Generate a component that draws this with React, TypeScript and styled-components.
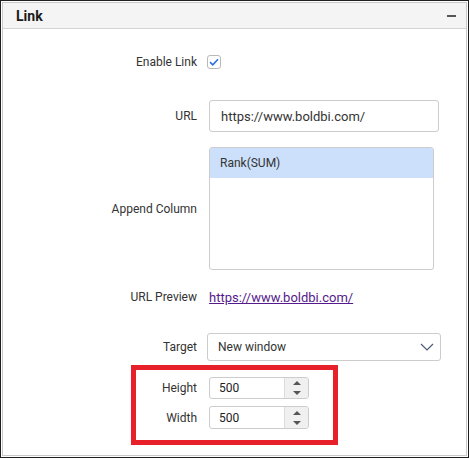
import React from "react";
import styled, { createGlobalStyle } from "styled-components";

const Global = createGlobalStyle`
  html, body { margin: 0; padding: 0; background: #fff; }
  body { font-family: Roboto, "Liberation Sans", Arial, sans-serif; }
  * { box-sizing: border-box; }
`;

const Frame = styled.div`
  width: 469px;
  height: 458px;
  border: 1px solid #1f1f1f;
  padding: 1px;
  background: #fff;
`;

const Panel = styled.div`
  width: 100%;
  height: 100%;
  border: 1px solid #c9c9c9;
  display: flex;
  flex-direction: column;
`;

const Header = styled.div`
  height: 26px;
  flex: none;
  background: #f4f4f4;
  border-bottom: 1px solid #d4d4d4;
  display: flex;
  align-items: center;
  justify-content: space-between;
  padding: 0 10px 0 13px;
`;

const Title = styled.span`
  font-size: 14px;
  font-weight: 700;
  color: #1a1a1a;
`;

const Minus = styled.span`
  width: 9px;
  height: 2px;
  background: #555;
  margin-top: 1px;
`;

const Body = styled.div`
  display: flex;
  flex-direction: column;
  padding-top: 25px;
`;

const Row = styled.div<{ $mt: number; $h: number; $label?: number; $gap?: number }>`
  display: grid;
  grid-template-columns: ${(p) => p.$label ?? 194}px 1fr;
  column-gap: ${(p) => p.$gap ?? 12}px;
  align-items: center;
  margin-top: ${(p) => p.$mt}px;
  height: ${(p) => p.$h}px;
`;

const Label = styled.span`
  text-align: right;
  font-size: 12px;
  color: #333;
  white-space: nowrap;
`;

const Check = styled.span`
  width: 14px;
  height: 14px;
  border: 1px solid #b9b9b9;
  border-radius: 3px;
  background: #fff;
  display: flex;
  align-items: center;
  justify-content: center;
  margin-left: -2px;
`;

const TextInput = styled.div`
  width: 230px;
  height: 32px;
  border: 1px solid #cccccc;
  border-radius: 3px;
  display: flex;
  align-items: center;
  padding-left: 11px;
  font-size: 13px;
  color: #333;
`;

const ListBox = styled.div`
  width: 225px;
  height: 123px;
  border: 1px solid #cccccc;
  border-radius: 3px;
  align-self: start;
  overflow: hidden;
`;

const ListItem = styled.div<{ $selected?: boolean }>`
  height: 30px;
  display: flex;
  align-items: center;
  padding-left: 10px;
  font-size: 12px;
  color: #333;
  background: ${(p) => (p.$selected ? "#cde0fb" : "transparent")};
`;

const Link = styled.a`
  font-size: 13px;
  color: #551a8b;
  text-decoration: underline;
`;

const Select = styled.div`
  width: 234px;
  height: 28px;
  border: 1px solid #cccccc;
  border-radius: 3px;
  display: flex;
  align-items: center;
  justify-content: space-between;
  padding: 0 6px 0 10px;
  font-size: 12px;
  color: #333;
  margin-left: -2px;
`;

const Annotation = styled.div`
  margin-top: 4px;
  margin-left: 128px;
  width: 207px;
  height: 80px;
  border: 5px solid #e8202a;
  padding-top: 7px;
  display: flex;
  flex-direction: column;
`;

const Spin = styled.div`
  width: 100px;
  border: 1px solid #cccccc;
  border-radius: 3px;
  display: flex;
  height: 100%;
  overflow: hidden;
`;

const SpinValue = styled.div`
  flex: 1;
  display: flex;
  align-items: center;
  padding-left: 9px;
  font-size: 12px;
  color: #222;
`;

const SpinButtons = styled.div`
  width: 24px;
  background: #f0f0f0;
  border-left: 1px solid #dcdcdc;
  display: flex;
  flex-direction: column;
  align-items: center;
  justify-content: center;
  gap: 6px;
`;

const Arrow = styled.span<{ $down?: boolean }>`
  width: 0;
  height: 0;
  border-left: 4px solid transparent;
  border-right: 4px solid transparent;
  ${(p) => (p.$down ? "border-top: 4px solid #555;" : "border-bottom: 4px solid #555;")}
`;

function Spinner({ value }: { value: string }) {
  return (
    <Spin>
      <SpinValue>{value}</SpinValue>
      <SpinButtons>
        <Arrow />
        <Arrow $down />
      </SpinButtons>
    </Spin>
  );
}

export default function App() {
  return (
    <>
      <Global />
      <Frame>
        <Panel>
          <Header>
            <Title>Link</Title>
            <Minus />
          </Header>
          <Body>
            <Row $mt={0} $h={16}>
              <Label>Enable Link</Label>
              <Check>
                <svg width="10" height="8" viewBox="0 0 10 8">
                  <path d="M1 4.2 L3.8 6.8 L9 1.2" fill="none" stroke="#2f6fe0" strokeWidth="1.6" />
                </svg>
              </Check>
            </Row>
            <Row $mt={30} $h={32}>
              <Label>URL</Label>
              <TextInput>https://www.boldbi.com/</TextInput>
            </Row>
            <Row $mt={15} $h={123}>
              <Label>Append Column</Label>
              <ListBox>
                <ListItem $selected>Rank(SUM)</ListItem>
              </ListBox>
            </Row>
            <Row $mt={18} $h={18}>
              <Label>URL Preview</Label>
              <Link>https://www.boldbi.com/</Link>
            </Row>
            <Row $mt={27} $h={28}>
              <Label>Target</Label>
              <Select>
                <span>New window</span>
                <svg width="14" height="8" viewBox="0 0 14 8">
                  <path d="M1 1 L7 7 L13 1" fill="none" stroke="#4a5a78" strokeWidth="1.2" />
                </svg>
              </Select>
            </Row>
            <Annotation>
              <Row $mt={0} $h={22} $label={61}>
                <Label>Height</Label>
                <Spinner value="500" />
              </Row>
              <Row $mt={7} $h={23} $label={61}>
                <Label>Width</Label>
                <Spinner value="500" />
              </Row>
            </Annotation>
          </Body>
        </Panel>
      </Frame>
    </>
  );
}
